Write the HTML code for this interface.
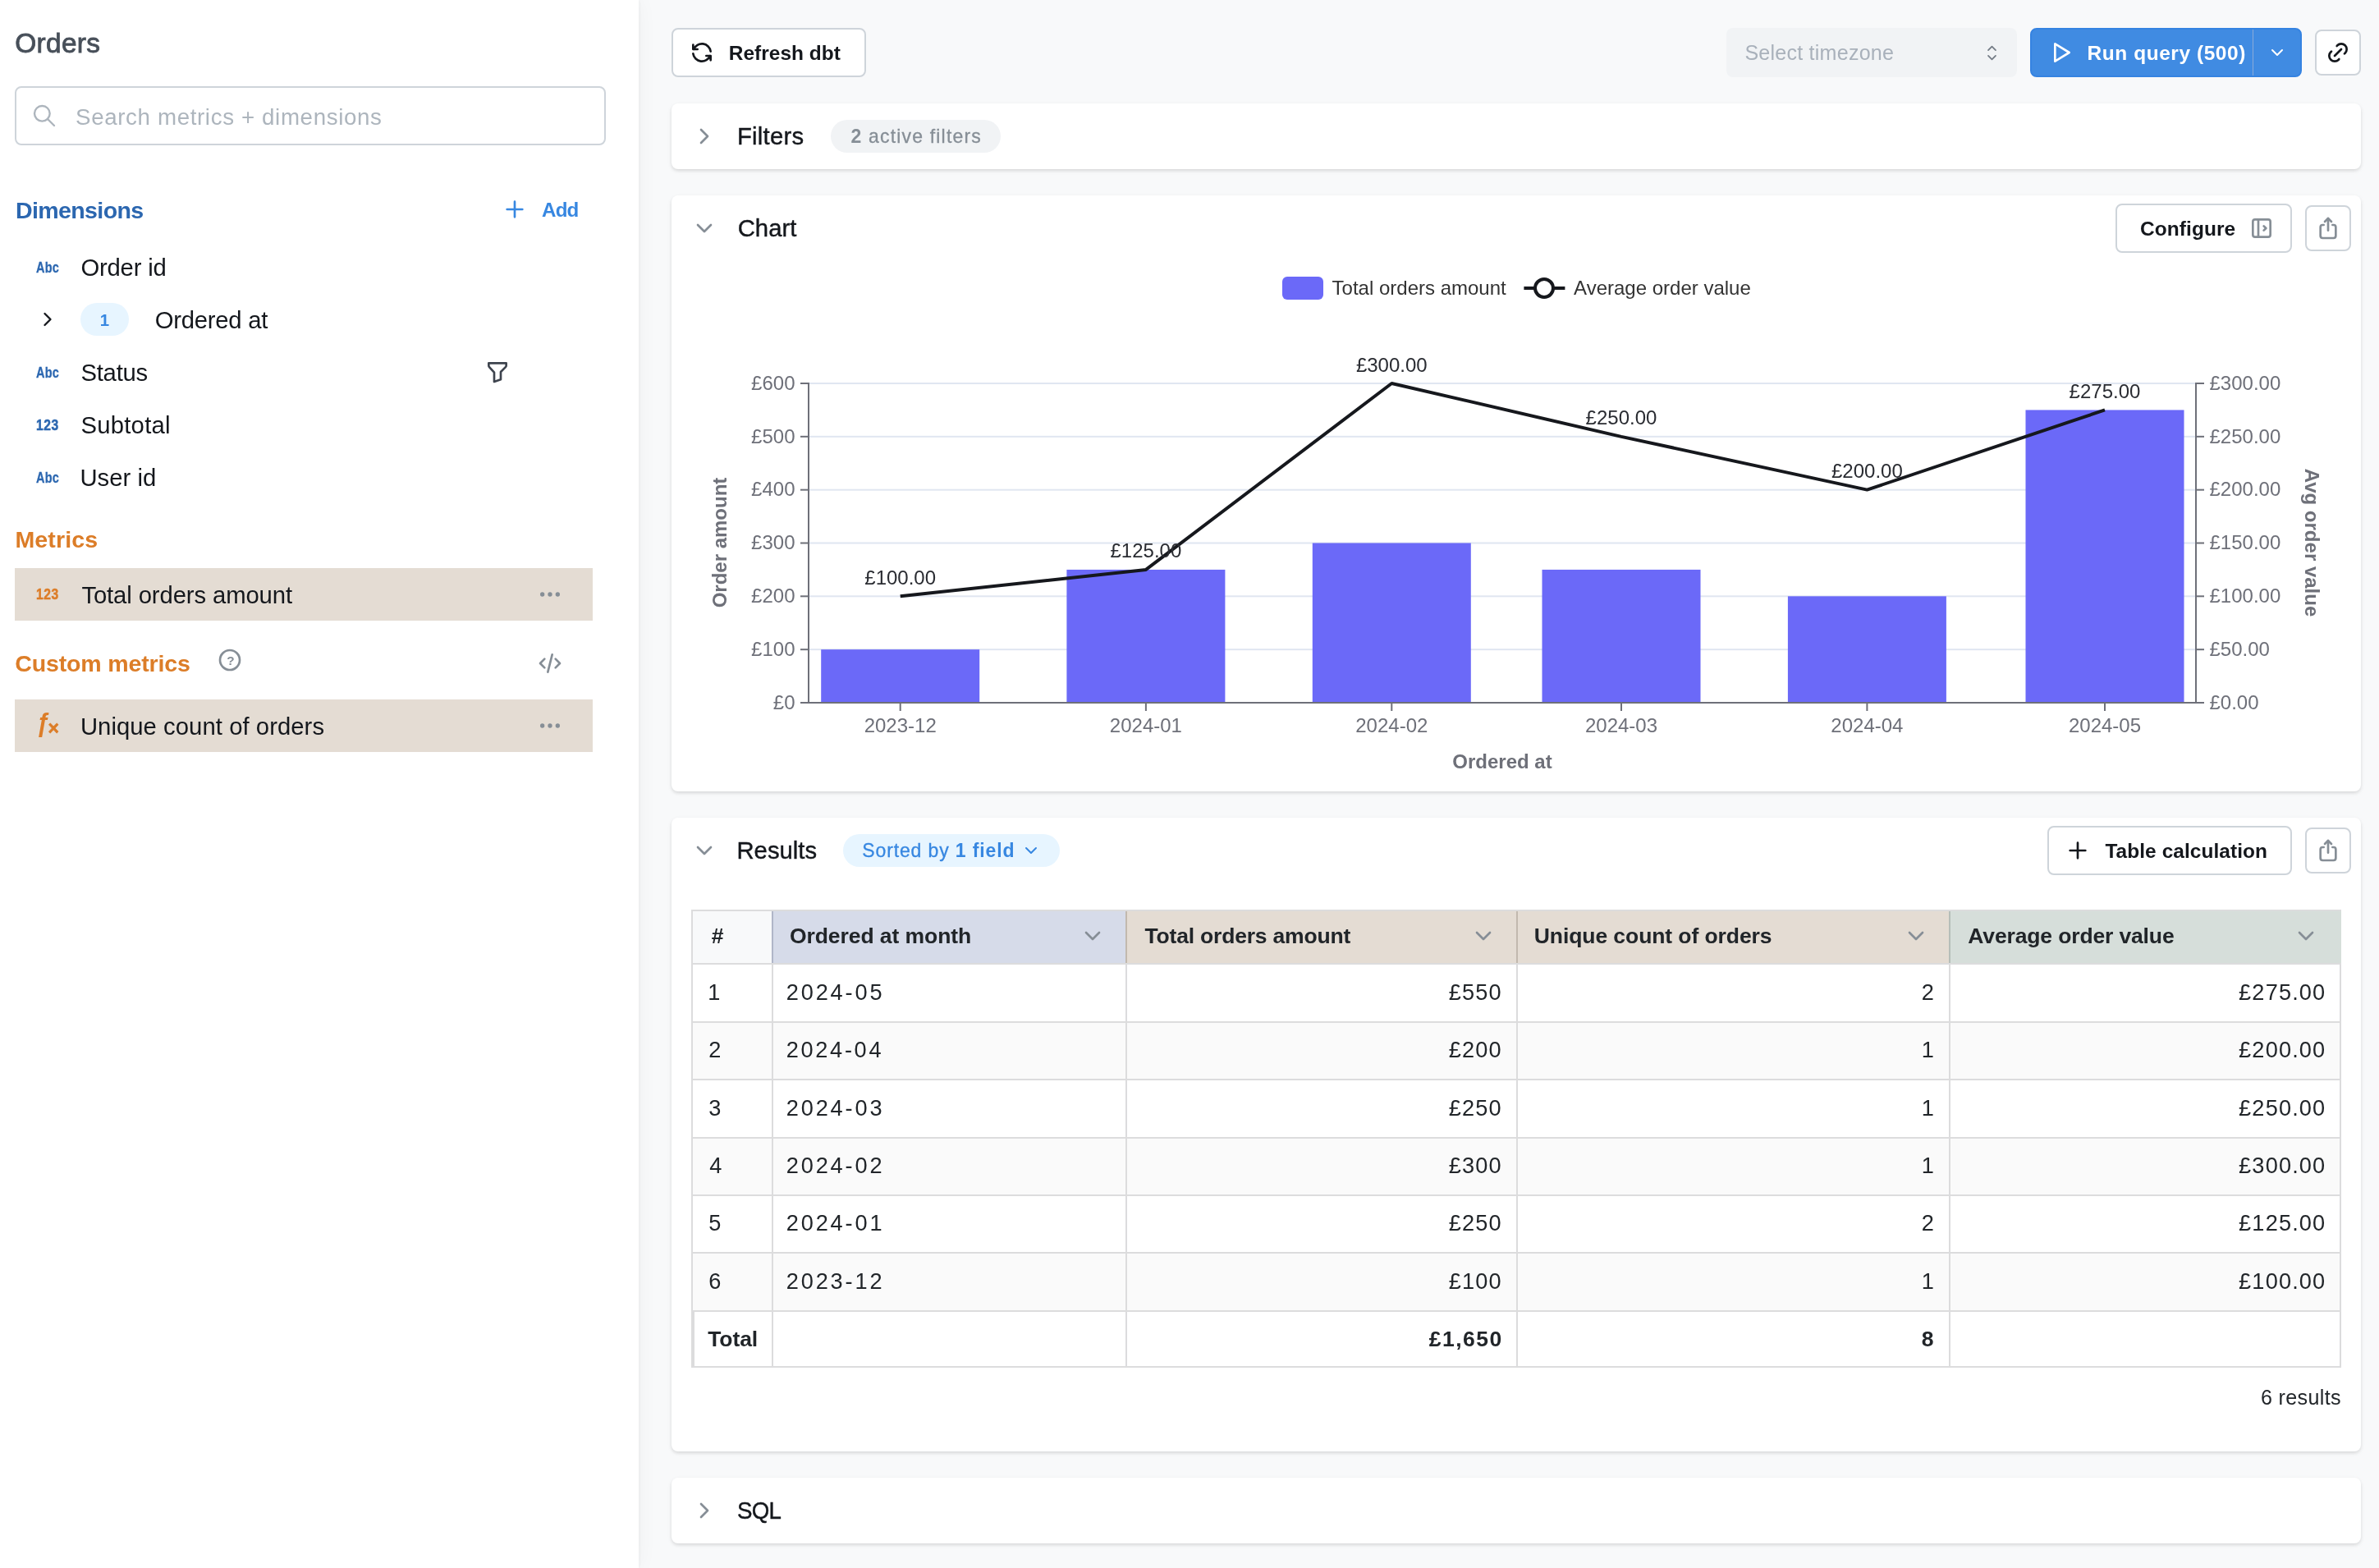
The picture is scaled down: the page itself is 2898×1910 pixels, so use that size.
<!DOCTYPE html>
<html lang="en"><head><meta charset="utf-8"><title>Orders</title>
<style>
html,body{margin:0;padding:0;}
body{width:2898px;height:1910px;overflow:hidden;background:#f8f9fa;position:relative;font-family:"Liberation Sans",sans-serif;}
.t{position:absolute;white-space:nowrap;line-height:1;}
.b{position:absolute;box-sizing:border-box;}
.sb{-webkit-text-stroke-width:0;font-weight:700;}
.i{position:absolute;overflow:visible;}
.card{position:absolute;box-sizing:border-box;background:#fff;border-radius:8px;box-shadow:0 2px 6px rgba(0,0,0,.05),0 2px 4px rgba(0,0,0,.1);}
.btn{position:absolute;box-sizing:border-box;background:#fff;border:2px solid #ced4da;border-radius:8px;}
svg text{font-family:"Liberation Sans",sans-serif;}
#w{position:absolute;left:0;top:0;width:2898px;height:1910px;will-change:transform;}
@media (max-width:1500px){html,body{width:1449px;height:955px;overflow:hidden;}#w{transform:scale(.5);transform-origin:0 0;}}
</style></head><body><div id="w">

<div class="b" style="left:0.00px;top:0.00px;width:778.00px;height:1910.00px;background:#fff;box-shadow:0 0 24px rgba(0,0,0,.045), 2px 0 3px rgba(0,0,0,.03);"></div>
<span class="t" id="t1" style="top:36.01px;font-size:33.44px;color:#474f59;left:19.30px;-webkit-text-stroke:0.84px #474f59;letter-spacing:0.291px;margin-left:-1.000px;">Orders</span>
<div class="btn" style="left:18px;top:105px;width:720px;height:72px;border-radius:8px;"></div>
<svg class="i" style="left:38.00px;top:125.00px" width="32" height="32" viewBox="0 0 24 24" fill="none" stroke="#adb5bd" stroke-width="1.8" stroke-linecap="round" stroke-linejoin="round"><circle cx="10" cy="10" r="7"/><path d="M21 21l-6 -6"/></svg>
<span class="t" id="t2" style="top:129.00px;font-size:27.69px;color:#adb5bd;left:93.10px;letter-spacing:0.635px;margin-left:-1.000px;">Search metrics + dimensions</span>
<span class="t" id="t3" style="top:242.01px;font-size:28.56px;color:#2c67b0;left:20.00px;font-weight:700;letter-spacing:-0.626px;margin-left:-1.000px;">Dimensions</span>
<svg class="i" style="left:611.00px;top:239.00px" width="32" height="32" viewBox="0 0 24 24" fill="none" stroke="#3787e1" stroke-width="2" stroke-linecap="round" stroke-linejoin="round"><path d="M12 5v14M5 12h14"/></svg>
<span class="t" id="t4" style="top:244.01px;font-size:24.48px;color:#3787e1;left:659.80px;font-weight:700;letter-spacing:-0.800px;transform-origin:0 50%;transform:scaleX(0.9860);margin-left:0.000px;">Add</span>
<span class="t" style="left:43.5px;top:316.96px;font-size:18.6px;font-weight:700;color:#2c67b0;letter-spacing:0.2px;transform-origin:0 0;transform:scaleX(0.78);-webkit-text-stroke:0.3px #2c67b0;">Abc</span>
<span class="t" id="t5" style="top:312.00px;font-size:29.26px;color:#14171c;left:99.40px;letter-spacing:-0.186px;margin-left:-1.000px;">Order id</span>
<svg class="i" style="left:44.00px;top:375.20px" width="28" height="28" viewBox="0 0 24 24" fill="none" stroke="#14171c" stroke-width="2" stroke-linecap="round" stroke-linejoin="round"><path d="M9 6l6 6l-6 6"/></svg>
<div class="b" style="left:98.00px;top:369.00px;width:59.00px;height:40.00px;background:#e7f5ff;border-radius:20px;"></div>
<span class="t" id="t6" style="top:380.00px;font-size:20.40px;color:#3787e1;left:122.80px;font-weight:700;margin-left:-1.000px;">1</span>
<span class="t" id="t7" style="top:376.00px;font-size:29.26px;color:#14171c;left:189.80px;letter-spacing:-0.245px;margin-left:-1.000px;">Ordered at</span>
<span class="t" style="left:43.5px;top:444.96px;font-size:18.6px;font-weight:700;color:#2c67b0;letter-spacing:0.2px;transform-origin:0 0;transform:scaleX(0.78);-webkit-text-stroke:0.3px #2c67b0;">Abc</span>
<span class="t" id="t8" style="top:440.00px;font-size:29.26px;color:#14171c;left:99.40px;letter-spacing:-0.222px;margin-left:-1.000px;">Status</span>
<span class="t" style="left:44px;top:508.96px;font-size:18.6px;font-weight:700;color:#2c67b0;letter-spacing:0.6px;transform-origin:0 0;transform:scaleX(0.84);-webkit-text-stroke:0.5px #2c67b0;">123</span>
<span class="t" id="t9" style="top:504.00px;font-size:29.26px;color:#14171c;left:99.40px;letter-spacing:0.265px;margin-left:-1.000px;">Subtotal</span>
<span class="t" style="left:43.5px;top:572.96px;font-size:18.6px;font-weight:700;color:#2c67b0;letter-spacing:0.2px;transform-origin:0 0;transform:scaleX(0.78);-webkit-text-stroke:0.3px #2c67b0;">Abc</span>
<span class="t" id="t10" style="top:568.00px;font-size:29.26px;color:#14171c;left:99.40px;letter-spacing:0.035px;margin-left:-2.000px;">User id</span>
<svg class="i" style="left:589.90px;top:436.70px" width="32" height="32" viewBox="0 0 24 24" fill="none" stroke="#3e444e" stroke-width="2" stroke-linecap="round" stroke-linejoin="round"><path d="M4 4h16v2.172a2 2 0 0 1 -.586 1.414l-4.414 4.414v7l-6 2v-8.5l-4.48 -4.928a2 2 0 0 1 -.52 -1.345v-2.227z"/></svg>
<span class="t" id="t11" style="top:643.02px;font-size:28.56px;color:#dc7d28;left:19.40px;font-weight:700;letter-spacing:0.135px;margin-left:-1.000px;">Metrics</span>
<div class="b" style="left:18.00px;top:692.00px;width:704.00px;height:64.00px;background:#e4dcd3;"></div>
<span class="t" style="left:44px;top:714.86px;font-size:18.6px;font-weight:700;color:#dc7d28;letter-spacing:0.6px;transform-origin:0 0;transform:scaleX(0.84);-webkit-text-stroke:0.5px #dc7d28;">123</span>
<span class="t" id="t12" style="top:711.02px;font-size:29.26px;color:#14171c;left:99.40px;letter-spacing:-0.105px;margin-left:0.000px;">Total orders amount</span>
<svg class="i" style="left:654.00px;top:708.00px" width="32" height="32" viewBox="0 0 24 24" fill="none" stroke="#868e96" stroke-width="2" stroke-linecap="round" stroke-linejoin="round"><circle cx="5" cy="12" r="1"/><circle cx="12" cy="12" r="1"/><circle cx="19" cy="12" r="1"/></svg>
<span class="t" id="t13" style="top:794.01px;font-size:28.56px;color:#dc7d28;left:19.30px;font-weight:700;letter-spacing:-0.167px;margin-left:-1.000px;">Custom metrics</span>
<svg class="i" style="left:264.00px;top:788.00px" width="32" height="32" viewBox="0 0 24 24" fill="none" stroke="#868e96" stroke-width="2" stroke-linecap="round" stroke-linejoin="round"><circle cx="12" cy="12" r="9"/></svg>
<span class="t" id="t14" style="top:797.00px;font-size:15.30px;color:#868e96;left:276.30px;font-weight:700;margin-left:0.000px;">?</span>
<svg class="i" style="left:654.00px;top:792.00px" width="32" height="32" viewBox="0 0 24 24" fill="none" stroke="#868e96" stroke-width="2" stroke-linecap="round" stroke-linejoin="round"><path d="M7 8l-4 4l4 4M17 8l4 4l-4 4M14 4l-4 16"/></svg>
<div class="b" style="left:18.00px;top:852.00px;width:704.00px;height:64.00px;background:#e4dcd3;"></div>
<span class="t" style="left:44px;top:864.56px;font-size:31px;font-style:italic;font-weight:700;color:#dc7d28;transform-origin:0 0;transform:scaleX(0.95);">&#402;</span>
<span class="t" style="left:58.5px;top:875.53px;font-size:23px;font-weight:700;color:#dc7d28;-webkit-text-stroke:0.6px #dc7d28;">&#215;</span>
<span class="t" id="t15" style="top:871.01px;font-size:29.26px;color:#14171c;left:99.90px;letter-spacing:0.057px;margin-left:-2.000px;">Unique count of orders</span>
<svg class="i" style="left:654.00px;top:868.00px" width="32" height="32" viewBox="0 0 24 24" fill="none" stroke="#868e96" stroke-width="2" stroke-linecap="round" stroke-linejoin="round"><circle cx="5" cy="12" r="1"/><circle cx="12" cy="12" r="1"/><circle cx="19" cy="12" r="1"/></svg>
<div class="btn" style="left:818px;top:34px;width:237px;height:60px;"></div>
<svg class="i" style="left:839.00px;top:48.00px" width="32" height="32" viewBox="0 0 24 24" fill="none" stroke="#14171c" stroke-width="2" stroke-linecap="round" stroke-linejoin="round"><path d="M20 11a8.1 8.1 0 0 0 -15.5 -2m-.5 -4v4h4"/><path d="M4 13a8.1 8.1 0 0 0 15.5 2m.5 4v-4h-4"/></svg>
<span class="t" id="t16" style="top:53.01px;font-size:24.48px;color:#14171c;left:888.70px;font-weight:700;letter-spacing:0.030px;margin-left:-1.000px;">Refresh dbt</span>
<div class="b" style="left:2103.00px;top:34.00px;width:354.00px;height:60.00px;background:#f1f3f5;border-radius:8px;"></div>
<span class="t" id="t17" style="top:52.01px;font-size:25.08px;color:#a9b1bb;left:2126.40px;letter-spacing:0.222px;margin-left:-1.000px;">Select timezone</span>
<svg class="i" style="left:2413.10px;top:50.70px" width="27" height="27" viewBox="0 0 24 24" fill="none" stroke="#727a84" stroke-width="1.5" stroke-linecap="round" stroke-linejoin="round"><path d="M8 9l4 -4l4 4M16 15l-4 4l-4 -4"/></svg>
<div class="b" style="left:2473.00px;top:34.00px;width:331.00px;height:60.00px;background:#408be2;border-radius:8px;border:2px solid #3583e1;"></div>
<div class="b" style="left:2744.00px;top:36.00px;width:1.00px;height:56.00px;background:#8aabd8;"></div>
<svg class="i" style="left:2494.00px;top:48.00px" width="32" height="32" viewBox="0 0 24 24" fill="none" stroke="#fff" stroke-width="2" stroke-linecap="round" stroke-linejoin="round"><path d="M7 4v16l13 -8z"/></svg>
<span class="t" id="t18" style="top:53.01px;font-size:24.48px;color:#fff;left:2543.50px;font-weight:700;letter-spacing:0.566px;margin-left:-1.000px;">Run query (500)</span>
<svg class="i" style="left:2762.30px;top:52.30px" width="24" height="24" viewBox="0 0 24 24" fill="none" stroke="#fff" stroke-width="2" stroke-linecap="round" stroke-linejoin="round"><path d="M6 9l6 6l6 -6"/></svg>
<div class="btn" style="left:2820px;top:36px;width:56px;height:56px;"></div>
<svg class="i" style="left:2832.00px;top:48.00px" width="32" height="32" viewBox="0 0 24 24" fill="none" stroke="#14171c" stroke-width="2" stroke-linecap="round" stroke-linejoin="round"><path d="M9 15l6 -6"/><path d="M11 6l.463 -.536a5 5 0 0 1 7.071 7.072l-.534 .464"/><path d="M13 18l-.397 .534a5.068 5.068 0 0 1 -7.127 0a4.972 4.972 0 0 1 0 -7.071l.524 -.463"/></svg>
<div class="card" style="left:818px;top:126px;width:2058px;height:80px;"></div>
<svg class="i" style="left:842.00px;top:150.00px" width="32" height="32" viewBox="0 0 24 24" fill="none" stroke="#868e96" stroke-width="2" stroke-linecap="round" stroke-linejoin="round"><path d="M9 6l6 6l-6 6"/></svg>
<span class="t" id="t19" style="top:152.01px;font-size:29.26px;color:#14171c;left:900.00px;-webkit-text-stroke:0.40px #14171c;letter-spacing:0.233px;margin-left:-2.000px;">Filters</span>
<div class="b" style="left:1012.00px;top:146.00px;width:206.50px;height:40.00px;background:#f1f3f5;border-radius:20px;"></div>
<span class="t" id="t20" style="top:155.00px;font-size:22.99px;color:#868e96;left:1036.50px;-webkit-text-stroke:0.31px #868e96;letter-spacing:1.184px;margin-left:0.000px;"><span class="sb">2</span> active filters</span>
<div class="card" style="left:818px;top:238px;width:2058px;height:726px;"></div>
<svg class="i" style="left:842.00px;top:262.00px" width="32" height="32" viewBox="0 0 24 24" fill="none" stroke="#868e96" stroke-width="2" stroke-linecap="round" stroke-linejoin="round"><path d="M6 9l6 6l6 -6"/></svg>
<span class="t" id="t21" style="top:264.00px;font-size:29.26px;color:#14171c;left:899.70px;-webkit-text-stroke:0.40px #14171c;letter-spacing:0.049px;margin-left:-1.000px;">Chart</span>
<div class="btn" style="left:2577px;top:248px;width:215px;height:60px;"></div>
<span class="t" id="t22" style="top:267.01px;font-size:24.48px;color:#14171c;left:2607.90px;font-weight:700;letter-spacing:0.095px;margin-left:-1.000px;">Configure</span>
<svg class="i" style="left:2739.00px;top:262.00px" width="32" height="32" viewBox="0 0 24 24" fill="none" stroke="#868e96" stroke-width="2" stroke-linecap="round" stroke-linejoin="round"><rect x="4" y="4" width="16" height="16" rx="2"/><path d="M9 4v16M14 10l2 2l-2 2"/></svg>
<div class="btn" style="left:2808px;top:250px;width:56px;height:56px;"></div>
<svg class="i" style="left:2820.00px;top:262.00px" width="32" height="32" viewBox="0 0 24 24" fill="none" stroke="#868e96" stroke-width="2" stroke-linecap="round" stroke-linejoin="round"><path d="M8 9h-1a2 2 0 0 0 -2 2v8a2 2 0 0 0 2 2h10a2 2 0 0 0 2 -2v-8a2 2 0 0 0 -2 -2h-1"/><path d="M12 14v-11"/><path d="M9 6l3 -3l3 3"/></svg>
<div class="card" style="left:818px;top:996px;width:2058px;height:772px;"></div>
<svg class="i" style="left:842.00px;top:1020.00px" width="32" height="32" viewBox="0 0 24 24" fill="none" stroke="#868e96" stroke-width="2" stroke-linecap="round" stroke-linejoin="round"><path d="M6 9l6 6l6 -6"/></svg>
<span class="t" id="t23" style="top:1022.01px;font-size:29.26px;color:#14171c;left:899.50px;-webkit-text-stroke:0.40px #14171c;letter-spacing:-0.004px;margin-left:-2.000px;">Results</span>
<div class="b" style="left:1027.00px;top:1016.00px;width:264.00px;height:40.00px;background:#e7f5ff;border-radius:20px;"></div>
<span class="t" id="t24" style="top:1025.01px;font-size:22.99px;color:#3787e1;left:1051.30px;-webkit-text-stroke:0.31px #3787e1;letter-spacing:0.878px;margin-left:-1.000px;">Sorted by <span class="sb">1 field</span></span>
<svg class="i" style="left:1244.00px;top:1024.00px" width="24" height="24" viewBox="0 0 24 24" fill="none" stroke="#3787e1" stroke-width="2" stroke-linecap="round" stroke-linejoin="round"><path d="M6 9l6 6l6 -6"/></svg>
<div class="btn" style="left:2494px;top:1006px;width:298px;height:60px;"></div>
<svg class="i" style="left:2515.30px;top:1020.00px" width="32" height="32" viewBox="0 0 24 24" fill="none" stroke="#14171c" stroke-width="2" stroke-linecap="round" stroke-linejoin="round"><path d="M12 5v14M5 12h14"/></svg>
<span class="t" id="t25" style="top:1025.00px;font-size:24.48px;color:#14171c;left:2564.40px;font-weight:700;letter-spacing:0.058px;margin-left:0.000px;">Table calculation</span>
<div class="btn" style="left:2808px;top:1008px;width:56px;height:56px;"></div>
<svg class="i" style="left:2820.00px;top:1020.00px" width="32" height="32" viewBox="0 0 24 24" fill="none" stroke="#868e96" stroke-width="2" stroke-linecap="round" stroke-linejoin="round"><path d="M8 9h-1a2 2 0 0 0 -2 2v8a2 2 0 0 0 2 2h10a2 2 0 0 0 2 -2v-8a2 2 0 0 0 -2 -2h-1"/><path d="M12 14v-11"/><path d="M9 6l3 -3l3 3"/></svg>
<div class="card" style="left:818px;top:1800px;width:2058px;height:80px;"></div>
<svg class="i" style="left:842.00px;top:1824.00px" width="32" height="32" viewBox="0 0 24 24" fill="none" stroke="#868e96" stroke-width="2" stroke-linecap="round" stroke-linejoin="round"><path d="M9 6l6 6l-6 6"/></svg>
<span class="t" id="t26" style="top:1826.01px;font-size:29.26px;color:#14171c;left:899.30px;-webkit-text-stroke:0.40px #14171c;letter-spacing:-0.800px;transform-origin:0 50%;transform:scaleX(0.9468);margin-left:-1.000px;">SQL</span>
<div class="b" style="left:844.00px;top:1110.00px;width:96.00px;height:63.00px;background:#f8f9fa;"></div>
<div class="b" style="left:940.00px;top:1110.00px;width:431.00px;height:63.00px;background:#d6dbe9;"></div>
<div class="b" style="left:1371.00px;top:1110.00px;width:476.00px;height:63.00px;background:#e4dcd3;"></div>
<div class="b" style="left:1847.00px;top:1110.00px;width:527.00px;height:63.00px;background:#e4dcd3;"></div>
<div class="b" style="left:2374.00px;top:1110.00px;width:478.00px;height:63.00px;background:#d6deda;"></div>
<div class="b" style="left:844.00px;top:1246.00px;width:2006.00px;height:68.00px;background:#fafafa;"></div>
<div class="b" style="left:844.00px;top:1387.00px;width:2006.00px;height:68.00px;background:#fafafa;"></div>
<div class="b" style="left:844.00px;top:1527.00px;width:2006.00px;height:69.00px;background:#fafafa;"></div>
<div class="b" style="left:842.00px;top:1108.00px;width:2010.00px;height:2.00px;background:#dcdcdd;"></div>
<div class="b" style="left:842.00px;top:1173.00px;width:2010.00px;height:2.00px;background:#dcdcdd;"></div>
<div class="b" style="left:842.00px;top:1244.00px;width:2010.00px;height:2.00px;background:#dcdcdd;"></div>
<div class="b" style="left:842.00px;top:1314.00px;width:2010.00px;height:2.00px;background:#dcdcdd;"></div>
<div class="b" style="left:842.00px;top:1385.00px;width:2010.00px;height:2.00px;background:#dcdcdd;"></div>
<div class="b" style="left:842.00px;top:1455.00px;width:2010.00px;height:2.00px;background:#dcdcdd;"></div>
<div class="b" style="left:842.00px;top:1525.00px;width:2010.00px;height:2.00px;background:#dcdcdd;"></div>
<div class="b" style="left:842.00px;top:1596.00px;width:2010.00px;height:2.00px;background:#dcdcdd;"></div>
<div class="b" style="left:842.00px;top:1664.00px;width:2010.00px;height:2.00px;background:#dcdcdd;"></div>
<div class="b" style="left:842.00px;top:1108.00px;width:2.00px;height:558.00px;background:#dcdcdd;"></div>
<div class="b" style="left:842.00px;top:1596.00px;width:4.00px;height:70.00px;background:#dcdcdd;"></div>
<div class="b" style="left:940.00px;top:1173.00px;width:2.00px;height:493.00px;background:#dcdcdd;"></div>
<div class="b" style="left:1371.00px;top:1173.00px;width:2.00px;height:493.00px;background:#dcdcdd;"></div>
<div class="b" style="left:1847.00px;top:1173.00px;width:2.00px;height:493.00px;background:#dcdcdd;"></div>
<div class="b" style="left:2374.00px;top:1173.00px;width:2.00px;height:493.00px;background:#dcdcdd;"></div>
<div class="b" style="left:2850.00px;top:1173.00px;width:2.00px;height:493.00px;background:#dcdcdd;"></div>
<div class="b" style="left:940.00px;top:1110.00px;width:2.00px;height:63.00px;background:#b0b6c8;"></div>
<div class="b" style="left:1371.00px;top:1110.00px;width:2.00px;height:63.00px;background:#c2b9ae;"></div>
<div class="b" style="left:1847.00px;top:1110.00px;width:2.00px;height:63.00px;background:#c2b9ae;"></div>
<div class="b" style="left:2374.00px;top:1110.00px;width:2.00px;height:63.00px;background:#b5beb9;"></div>
<span class="t" id="t27" style="top:1127.01px;font-size:26.52px;color:#212529;left:866.80px;font-weight:700;margin-left:0.000px;">#</span>
<span class="t" id="t28" style="top:1127.01px;font-size:26.52px;color:#212529;left:962.90px;font-weight:700;letter-spacing:-0.071px;margin-left:-1.000px;">Ordered at month</span>
<span class="t" id="t29" style="top:1127.01px;font-size:26.52px;color:#212529;left:1394.60px;font-weight:700;letter-spacing:-0.208px;margin-left:0.000px;">Total orders amount</span>
<span class="t" id="t30" style="top:1127.01px;font-size:26.52px;color:#212529;left:1869.80px;font-weight:700;letter-spacing:-0.092px;margin-left:-1.000px;">Unique count of orders</span>
<span class="t" id="t31" style="top:1127.01px;font-size:26.52px;color:#212529;left:2397.30px;font-weight:700;letter-spacing:-0.147px;margin-left:0.000px;">Average order value</span>
<svg class="i" style="left:1315.00px;top:1124.00px" width="32" height="32" viewBox="0 0 24 24" fill="none" stroke="#868e96" stroke-width="2" stroke-linecap="round" stroke-linejoin="round"><path d="M6 9l6 6l6 -6"/></svg>
<svg class="i" style="left:1791.00px;top:1124.00px" width="32" height="32" viewBox="0 0 24 24" fill="none" stroke="#868e96" stroke-width="2" stroke-linecap="round" stroke-linejoin="round"><path d="M6 9l6 6l6 -6"/></svg>
<svg class="i" style="left:2318.00px;top:1124.00px" width="32" height="32" viewBox="0 0 24 24" fill="none" stroke="#868e96" stroke-width="2" stroke-linecap="round" stroke-linejoin="round"><path d="M6 9l6 6l6 -6"/></svg>
<svg class="i" style="left:2793.40px;top:1124.00px" width="32" height="32" viewBox="0 0 24 24" fill="none" stroke="#868e96" stroke-width="2" stroke-linecap="round" stroke-linejoin="round"><path d="M6 9l6 6l6 -6"/></svg>
<span class="t" id="rn0" style="top:1195.00px;font-size:27.17px;color:#212529;left:864.30px;margin-left:-2.000px;">1</span>
<span class="t" id="rd0" style="top:1195.00px;font-size:27.17px;color:#212529;left:958.80px;letter-spacing:2.839px;margin-left:-1.000px;">2024-05</span>
<span class="t" id="ra0" style="top:1195.00px;font-size:27.17px;color:#212529;right:1069.60px;letter-spacing:1.094px;margin-right:-1.197px;">£550</span>
<span class="t" id="rc0" style="top:1195.00px;font-size:27.17px;color:#212529;right:543.20px;margin-right:-1.103px;">2</span>
<span class="t" id="rv0" style="top:1195.00px;font-size:27.17px;color:#212529;right:65.90px;letter-spacing:1.155px;margin-right:-1.258px;">£275.00</span>
<span class="t" id="rn1" style="top:1265.00px;font-size:27.17px;color:#212529;left:864.30px;margin-left:-1.000px;">2</span>
<span class="t" id="rd1" style="top:1265.00px;font-size:27.17px;color:#212529;left:958.80px;letter-spacing:2.672px;margin-left:-1.000px;">2024-04</span>
<span class="t" id="ra1" style="top:1265.00px;font-size:27.17px;color:#212529;right:1069.60px;letter-spacing:1.094px;margin-right:-1.197px;">£200</span>
<span class="t" id="rc1" style="top:1265.00px;font-size:27.17px;color:#212529;right:543.20px;margin-right:-1.103px;">1</span>
<span class="t" id="rv1" style="top:1265.00px;font-size:27.17px;color:#212529;right:65.90px;letter-spacing:1.155px;margin-right:-1.258px;">£200.00</span>
<span class="t" id="rn2" style="top:1336.00px;font-size:27.17px;color:#212529;left:864.30px;margin-left:-1.000px;">3</span>
<span class="t" id="rd2" style="top:1336.00px;font-size:27.17px;color:#212529;left:958.80px;letter-spacing:2.839px;margin-left:-1.000px;">2024-03</span>
<span class="t" id="ra2" style="top:1336.00px;font-size:27.17px;color:#212529;right:1069.60px;letter-spacing:1.094px;margin-right:-1.197px;">£250</span>
<span class="t" id="rc2" style="top:1336.00px;font-size:27.17px;color:#212529;right:543.20px;margin-right:-1.103px;">1</span>
<span class="t" id="rv2" style="top:1336.00px;font-size:27.17px;color:#212529;right:65.90px;letter-spacing:1.155px;margin-right:-1.258px;">£250.00</span>
<span class="t" id="rn3" style="top:1406.01px;font-size:27.17px;color:#212529;left:864.30px;margin-left:0.000px;">4</span>
<span class="t" id="rd3" style="top:1406.01px;font-size:27.17px;color:#212529;left:958.80px;letter-spacing:2.839px;margin-left:-1.000px;">2024-02</span>
<span class="t" id="ra3" style="top:1406.01px;font-size:27.17px;color:#212529;right:1069.60px;letter-spacing:1.094px;margin-right:-1.197px;">£300</span>
<span class="t" id="rc3" style="top:1406.01px;font-size:27.17px;color:#212529;right:543.20px;margin-right:-1.103px;">1</span>
<span class="t" id="rv3" style="top:1406.01px;font-size:27.17px;color:#212529;right:65.90px;letter-spacing:1.155px;margin-right:-1.258px;">£300.00</span>
<span class="t" id="rn4" style="top:1476.01px;font-size:27.17px;color:#212529;left:864.30px;margin-left:-1.000px;">5</span>
<span class="t" id="rd4" style="top:1476.01px;font-size:27.17px;color:#212529;left:958.80px;letter-spacing:2.839px;margin-left:-1.000px;">2024-01</span>
<span class="t" id="ra4" style="top:1476.01px;font-size:27.17px;color:#212529;right:1069.60px;letter-spacing:1.094px;margin-right:-1.197px;">£250</span>
<span class="t" id="rc4" style="top:1476.01px;font-size:27.17px;color:#212529;right:543.20px;margin-right:-1.103px;">2</span>
<span class="t" id="rv4" style="top:1476.01px;font-size:27.17px;color:#212529;right:65.90px;letter-spacing:1.155px;margin-right:-1.258px;">£125.00</span>
<span class="t" id="rn5" style="top:1547.01px;font-size:27.17px;color:#212529;left:864.30px;margin-left:-1.000px;">6</span>
<span class="t" id="rd5" style="top:1547.01px;font-size:27.17px;color:#212529;left:958.80px;letter-spacing:2.839px;margin-left:-1.000px;">2023-12</span>
<span class="t" id="ra5" style="top:1547.01px;font-size:27.17px;color:#212529;right:1069.60px;letter-spacing:1.094px;margin-right:-1.197px;">£100</span>
<span class="t" id="rc5" style="top:1547.01px;font-size:27.17px;color:#212529;right:543.20px;margin-right:-1.103px;">1</span>
<span class="t" id="rv5" style="top:1547.01px;font-size:27.17px;color:#212529;right:65.90px;letter-spacing:1.155px;margin-right:-1.258px;">£100.00</span>
<span class="t" id="t62" style="top:1618.00px;font-size:26.52px;color:#212529;left:862.20px;font-weight:700;letter-spacing:-0.102px;margin-left:0.000px;">Total</span>
<span class="t" id="t63" style="top:1618.00px;font-size:26.52px;color:#212529;right:1069.60px;font-weight:700;letter-spacing:1.447px;margin-right:-2.194px;">£1,650</span>
<span class="t" id="t64" style="top:1618.00px;font-size:26.52px;color:#212529;right:543.20px;font-weight:700;margin-right:-0.747px;">8</span>
<span class="t" id="t65" style="top:1690.01px;font-size:25.08px;color:#212529;right:47.00px;letter-spacing:0.345px;margin-right:-0.884px;">6 results</span>
<svg class="i" style="left:0;top:0" width="2898" height="1000" viewBox="0 0 2898 1000" font-size="24">
<rect x="985" y="790.17" width="1690" height="2" fill="#e0e6f1"/>
<rect x="985" y="725.33" width="1690" height="2" fill="#e0e6f1"/>
<rect x="985" y="660.50" width="1690" height="2" fill="#e0e6f1"/>
<rect x="985" y="595.67" width="1690" height="2" fill="#e0e6f1"/>
<rect x="985" y="530.83" width="1690" height="2" fill="#e0e6f1"/>
<rect x="985" y="466.00" width="1690" height="2" fill="#e0e6f1"/>
<rect x="1000.20" y="791.17" width="193" height="64.83" fill="#6b69f8"/>
<rect x="1299.40" y="693.92" width="193" height="162.08" fill="#6b69f8"/>
<rect x="1598.80" y="661.50" width="193" height="194.50" fill="#6b69f8"/>
<rect x="1878.50" y="693.92" width="193" height="162.08" fill="#6b69f8"/>
<rect x="2177.90" y="726.33" width="193" height="129.67" fill="#6b69f8"/>
<rect x="2467.50" y="499.42" width="193" height="356.58" fill="#6b69f8"/>
<rect x="984" y="466" width="2" height="391" fill="#6e7079"/>
<rect x="2674" y="466" width="2" height="391" fill="#6e7079"/>
<rect x="984" y="855" width="1692" height="2" fill="#6e7079"/>
<rect x="975" y="855.00" width="10" height="2" fill="#6e7079"/>
<rect x="2675" y="855.00" width="10" height="2" fill="#6e7079"/>
<text x="968.5" y="863.80" text-anchor="end" fill="#6e7079">£0</text>
<text x="2691.5" y="863.80" fill="#6e7079">£0.00</text>
<rect x="975" y="790.17" width="10" height="2" fill="#6e7079"/>
<rect x="2675" y="790.17" width="10" height="2" fill="#6e7079"/>
<text x="968.5" y="798.97" text-anchor="end" fill="#6e7079">£100</text>
<text x="2691.5" y="798.97" fill="#6e7079">£50.00</text>
<rect x="975" y="725.33" width="10" height="2" fill="#6e7079"/>
<rect x="2675" y="725.33" width="10" height="2" fill="#6e7079"/>
<text x="968.5" y="734.13" text-anchor="end" fill="#6e7079">£200</text>
<text x="2691.5" y="734.13" fill="#6e7079">£100.00</text>
<rect x="975" y="660.50" width="10" height="2" fill="#6e7079"/>
<rect x="2675" y="660.50" width="10" height="2" fill="#6e7079"/>
<text x="968.5" y="669.30" text-anchor="end" fill="#6e7079">£300</text>
<text x="2691.5" y="669.30" fill="#6e7079">£150.00</text>
<rect x="975" y="595.67" width="10" height="2" fill="#6e7079"/>
<rect x="2675" y="595.67" width="10" height="2" fill="#6e7079"/>
<text x="968.5" y="604.47" text-anchor="end" fill="#6e7079">£400</text>
<text x="2691.5" y="604.47" fill="#6e7079">£200.00</text>
<rect x="975" y="530.83" width="10" height="2" fill="#6e7079"/>
<rect x="2675" y="530.83" width="10" height="2" fill="#6e7079"/>
<text x="968.5" y="539.63" text-anchor="end" fill="#6e7079">£500</text>
<text x="2691.5" y="539.63" fill="#6e7079">£250.00</text>
<rect x="975" y="466.00" width="10" height="2" fill="#6e7079"/>
<rect x="2675" y="466.00" width="10" height="2" fill="#6e7079"/>
<text x="968.5" y="474.80" text-anchor="end" fill="#6e7079">£600</text>
<text x="2691.5" y="474.80" fill="#6e7079">£300.00</text>
<rect x="1095.70" y="856" width="2" height="10" fill="#6e7079"/>
<text x="1096.70" y="891.5" text-anchor="middle" fill="#6e7079">2023-12</text>
<rect x="1394.90" y="856" width="2" height="10" fill="#6e7079"/>
<text x="1395.90" y="891.5" text-anchor="middle" fill="#6e7079">2024-01</text>
<rect x="1694.30" y="856" width="2" height="10" fill="#6e7079"/>
<text x="1695.30" y="891.5" text-anchor="middle" fill="#6e7079">2024-02</text>
<rect x="1974.00" y="856" width="2" height="10" fill="#6e7079"/>
<text x="1975.00" y="891.5" text-anchor="middle" fill="#6e7079">2024-03</text>
<rect x="2273.40" y="856" width="2" height="10" fill="#6e7079"/>
<text x="2274.40" y="891.5" text-anchor="middle" fill="#6e7079">2024-04</text>
<rect x="2563.00" y="856" width="2" height="10" fill="#6e7079"/>
<text x="2564.00" y="891.5" text-anchor="middle" fill="#6e7079">2024-05</text>
<polyline points="1096.70,726.33 1395.90,693.92 1695.30,467.00 1975.00,531.83 2274.40,596.67 2564.00,499.42" fill="none" stroke="#16181d" stroke-width="4" stroke-linejoin="bevel"/>
<text x="1096.70" y="711.83" text-anchor="middle" fill="#2a2c32">£100.00</text>
<text x="1395.90" y="679.42" text-anchor="middle" fill="#2a2c32">£125.00</text>
<text x="1695.30" y="452.50" text-anchor="middle" fill="#2a2c32">£300.00</text>
<text x="1975.00" y="517.33" text-anchor="middle" fill="#2a2c32">£250.00</text>
<text x="2274.40" y="582.17" text-anchor="middle" fill="#2a2c32">£200.00</text>
<text x="2564.00" y="484.92" text-anchor="middle" fill="#2a2c32">£275.00</text>
<text x="1830" y="935.6" text-anchor="middle" font-weight="700" fill="#6e7079">Ordered at</text>
<text transform="translate(885.3,661) rotate(-90)" text-anchor="middle" font-weight="700" fill="#6e7079">Order amount</text>
<text transform="translate(2808.3,661) rotate(90)" text-anchor="middle" font-weight="700" fill="#6e7079">Avg order value</text>
<rect x="1562" y="337" width="50" height="28" rx="6" fill="#6b69f8"/>
<text x="1622.6" y="359.3" fill="#333">Total orders amount</text>
<rect x="1856.4" y="349" width="50" height="4" fill="#16181d"/>
<circle cx="1881" cy="351" r="11" fill="#fff" stroke="#16181d" stroke-width="4"/>
<text x="1917.1" y="359.3" fill="#333">Average order value</text>
</svg>
</div></body></html>
